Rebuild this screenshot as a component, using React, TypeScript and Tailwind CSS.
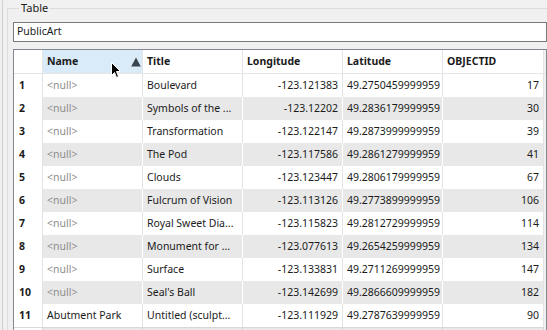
import React from "react";

type Row = {
  name: string | null;
  title: string;
  lon: string;
  lat: string;
  id: number;
};

const rows: Row[] = [
  { name: null, title: "Boulevard", lon: "-123.121383", lat: "49.2750459999959", id: 17 },
  { name: null, title: "Symbols of the ...", lon: "-123.12202", lat: "49.2836179999959", id: 30 },
  { name: null, title: "Transformation", lon: "-123.122147", lat: "49.2873999999959", id: 39 },
  { name: null, title: "The Pod", lon: "-123.117586", lat: "49.2861279999959", id: 41 },
  { name: null, title: "Clouds", lon: "-123.123447", lat: "49.2806179999959", id: 67 },
  { name: null, title: "Fulcrum of Vision", lon: "-123.113126", lat: "49.2773899999959", id: 106 },
  { name: null, title: "Royal Sweet Dia...", lon: "-123.115823", lat: "49.2812729999959", id: 114 },
  { name: null, title: "Monument for ...", lon: "-123.077613", lat: "49.2654259999959", id: 134 },
  { name: null, title: "Surface", lon: "-123.133831", lat: "49.2711269999959", id: 147 },
  { name: null, title: "Seal's Ball", lon: "-123.142699", lat: "49.2866609999959", id: 182 },
  { name: "Abutment Park", title: "Untitled (sculpt...", lon: "-123.111929", lat: "49.2787639999959", id: 90 },
];

const gridCols = "grid grid-cols-[29px_100px_100px_100px_100px_101px_1fr]";

// mouse pointer hovering over the sorted column header
const Cursor = () => (
  <svg
    className="absolute left-[68px] top-[12px]"
    width="11"
    height="17"
    viewBox="0 0 11 17"
  >
    <path
      d="M0.5 0.5 L0.5 13.5 L3.5 10.5 L5.5 15.5 L7.5 14.5 L5.5 9.5 L9.5 9.5 Z"
      fill="#000"
      stroke="#fff"
      strokeWidth="1"
      strokeLinejoin="round"
    />
  </svg>
);

const HeaderCell: React.FC<{ label: string; active?: boolean }> = ({ label, active }) => (
  <div
    className={`relative h-[24px] border-r border-b border-[#e5e5e5] pl-[4px] flex items-center font-bold ${
      active ? "bg-[#d9ebf9]" : "bg-white"
    }`}
  >
    {label}
    {active && (
      <>
        <svg className="absolute right-[1px] top-[7px]" width="10" height="10" viewBox="0 0 10 10">
          <path d="M5 0.5 L9.8 9.5 L0.2 9.5 Z" fill="#39444e" />
        </svg>
        <Cursor />
      </>
    )}
  </div>
);

export default function App() {
  return (
    <div
      className="w-[547px] h-[330px] overflow-hidden bg-[#f0f0f0] text-[10.5px] text-[#1b1b1b] pl-[2px]"
      style={{ fontFamily: '"Segoe UI", "Noto Sans", sans-serif' }}
    >
      <div className="h-full border-l border-[#d0d0d0] pl-[4px]">
        <fieldset className="h-[400px] border-l border-t border-[#dcdcdc] pl-[5px]">
          <legend className="ml-[6px] px-[2px] h-[16px] leading-[16px] text-[11px] text-[#1b1b1b]">Table</legend>

          <div className="mt-[6px] h-[20px] bg-white border border-[#7a7a7a] pl-[3px] flex items-center">
            PublicArt
          </div>

          <div className="mt-[7px] border border-[#828790] bg-white">
            <div className={gridCols}>
              <div className="h-[24px] border-r border-b border-[#e5e5e5] bg-white" />
              <HeaderCell label="Name" active />
              <HeaderCell label="Title" />
              <HeaderCell label="Longitude" />
              <HeaderCell label="Latitude" />
              <HeaderCell label="OBJECTID" />
              <div className="h-[24px] border-b border-[#e5e5e5] bg-[#f0f0f0]" />
            </div>

            {rows.map((r, i) => {
              const odd = i % 2 === 1;
              const bg = odd ? "bg-[#e8e8e8]" : "bg-white";
              const line = odd ? "border-white" : "border-[#e3e3e3]";
              return (
                <div key={i} className={gridCols}>
                  <div className="h-[23px] bg-white border-r border-[#e3e3e3] pl-[5px] flex items-center font-bold">
                    {i + 1}
                  </div>
                  <div className={`h-[23px] ${bg} border-r ${line} pl-[4px] flex items-center whitespace-nowrap overflow-hidden`}>
                    {r.name === null ? <span className="text-[#8c8c8c]">&lt;null&gt;</span> : r.name}
                  </div>
                  <div className={`h-[23px] ${bg} border-r ${line} pl-[4px] flex items-center whitespace-nowrap overflow-hidden`}>
                    {r.title}
                  </div>
                  <div className={`h-[23px] ${bg} border-r ${line} pr-[4px] flex items-center justify-end whitespace-nowrap`}>
                    {r.lon}
                  </div>
                  <div className={`h-[23px] ${bg} border-r ${line} pl-[4px] flex items-center whitespace-nowrap overflow-hidden`}>
                    {r.lat}
                  </div>
                  <div className={`h-[23px] ${bg} border-r border-[#e3e3e3] pr-[4px] flex items-center justify-end`}>
                    {r.id}
                  </div>
                  <div className="h-[23px] bg-[#f0f0f0]" />
                </div>
              );
            })}

            {/* next row, only its top edge is in view */}
            <div className={gridCols}>
              <div className="h-[23px] bg-white border-t border-r border-[#d8d8d8]" />
              <div className="h-[23px] bg-[#e8e8e8] border-t border-r border-[#d8d8d8]" />
              <div className="h-[23px] bg-[#e8e8e8] border-t border-r border-[#d8d8d8]" />
              <div className="h-[23px] bg-[#e8e8e8] border-t border-r border-[#d8d8d8]" />
              <div className="h-[23px] bg-[#e8e8e8] border-t border-r border-[#d8d8d8]" />
              <div className="h-[23px] bg-[#e8e8e8] border-t border-r border-[#d8d8d8]" />
              <div className="h-[23px] bg-[#f0f0f0]" />
            </div>
          </div>
        </fieldset>
      </div>
    </div>
  );
}
